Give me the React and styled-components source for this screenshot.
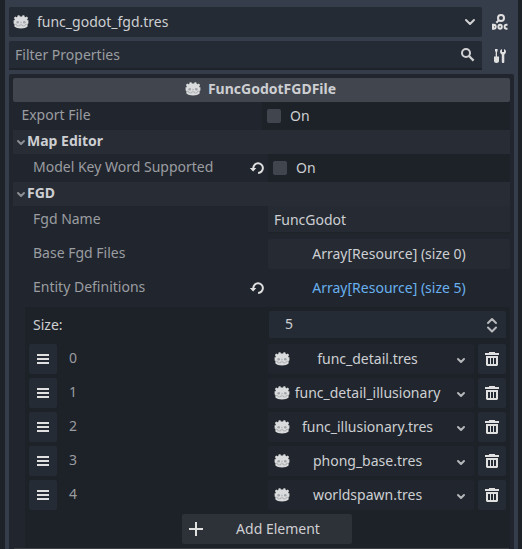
import React from "react";
import styled, { createGlobalStyle } from "styled-components";

const Global = createGlobalStyle`
  * { box-sizing: border-box; }
  body { margin: 0; background: #1d2229; overflow: hidden; }
  svg { display: block; flex: none; }
`;

const Frame = styled.div`
  width: 522px;
  height: 549px;
  padding: 0 4px 0 5px;
  overflow: hidden;
  background: #1d2229;
  color: #cdcfd2;
  font: 14px/20px "Noto Sans", sans-serif;
  white-space: nowrap;
`;
const Dock = styled.div`
  height: 549px;
  padding: 7px 4px 0;
  background: #363d4a;
  display: flex;
  flex-direction: column;
  gap: 4px;
`;
const ToolRow = styled.div`
  display: flex;
  align-items: center;
  height: ${(p) => p.$h}px;
`;
const ResourceSelect = styled.div`
  width: 473px;
  height: 30px;
  padding: 0 4px;
  border-radius: 2px;
  background: #252b34;
  display: flex;
  align-items: center;
`;
const ResourceName = styled.span`
  flex: 1;
  margin-left: 8px;
`;
const SearchField = styled.div`
  width: 473px;
  height: 29px;
  padding: 1px 6px 0;
  border-radius: 2px 2px 0 0;
  border-bottom: 2px solid #1e232a;
  background: #252b34;
  color: #9a9da1;
  display: flex;
  align-items: center;
  justify-content: space-between;
`;
const ToolButton = styled.div`
  margin-left: 10px;
`;
const Inspector = styled.div`
  flex: 1;
  padding: 4px 4px 0;
  border-radius: 2px 2px 0 0;
  background: #21262e;
  display: flex;
  flex-direction: column;
`;
const ClassHeader = styled.div`
  height: 24px;
  border-radius: 2px;
  background: #41454d;
  display: flex;
  align-items: center;
  justify-content: center;
  gap: 7px;
  padding: 0 2px 2px 0;
  font-weight: 700;
`;
const Section = styled.div`
  height: 24px;
  padding: 0 0 2px 2px;
  background: #282c34;
  display: flex;
  align-items: center;
  font-weight: 700;

  svg {
    margin-top: 2px;
  }
`;
const Property = styled.div`
  display: flex;
  height: ${(p) => p.$h || 28}px;
  margin-bottom: ${(p) => p.$gap || 0}px;
`;
const PropertyLabel = styled.div`
  flex: 1;
  display: flex;
  align-items: center;
  padding: 0 0 2px ${(p) => (p.$nested ? 20 : 8.4)}px;
  color: #9b9da1;
`;
const Revert = styled.div`
  display: flex;
  align-items: center;
  padding-right: 3px;
`;
const CheckCell = styled.div`
  width: ${(p) => p.$w}px;
  padding-left: 5px;
  border-radius: 2px;
  background: #1d2128;
  display: flex;
  align-items: center;
`;
const CheckBox = styled.span`
  width: 14px;
  height: 14px;
  margin-right: 9px;
  border-radius: 2px;
  background: #41454d;
`;
const TextField = styled.div`
  width: 242px;
  height: 28px;
  padding: 4px 6px;
  border-bottom: 2px solid #1f242b;
  background: #252a33;
`;
const ArrayButton = styled.div`
  width: 242px;
  height: 30px;
  border-radius: 2px;
  background: ${(p) => (p.$open ? "transparent" : "#252a33")};
  color: ${(p) => (p.$open ? "#68b0ee" : "#cdcfd2")};
  line-height: 30px;
  text-align: center;
`;
const ArrayPanel = styled.div`
  margin: 4px 0 0 12px;
  padding: 4px 4px 0;
  height: 241px;
  border-radius: 2px 2px 0 0;
  background: #1d2128;
`;
const SizeRow = styled.div`
  display: flex;
  justify-content: space-between;
  height: 27px;
  margin-bottom: 6px;
  padding-left: 4px;
  line-height: 27px;
`;
const Stepper = styled.div`
  width: 237px;
  padding: 0 8px 0 16px;
  border-radius: 2px 2px 0 0;
  background: #252b34;
  display: flex;
  align-items: center;
  justify-content: space-between;
`;
const StepperValue = styled.span`
  padding-bottom: 2px;
`;
const ElementRow = styled.div`
  display: flex;
  height: 30px;
  margin-bottom: 4px;
`;
const SquareButton = styled.div`
  width: 28px;
  border-radius: 2px;
  background: #252b34;
  display: flex;
  align-items: center;
  justify-content: center;
`;
const ElementIndex = styled.div`
  flex: 1;
  padding: 4px 0 0 12px;
  color: #9a9ca0;
`;
const ElementPicker = styled.div`
  width: 206px;
  margin-right: 4px;
  padding: 0 7px 0 6px;
  border-radius: 2px;
  background: #21262e;
  display: flex;
  align-items: center;
  justify-content: space-between;

  svg:last-child {
    margin-top: 2px;
  }
`;
const ElementName = styled.div`
  width: 149px;
  margin-right: auto;
  margin-left: 3px;
  overflow: hidden;
  text-align: center;
`;
const AddButton = styled.div`
  width: 170px;
  height: 30px;
  margin-left: 153px;
  padding-left: 7px;
  border-radius: 2px;
  background: #2d3138;
  display: flex;
  align-items: center;
`;
const AddText = styled.div`
  flex: 1;
  padding-left: 1px;
  text-align: center;
`;
const BottomRule = styled.div`
  height: 1px;
  margin: 0 1px;
  background: #3c4045;
`;

const GodotHead = () => (
  <svg width="16" height="16" viewBox="0 0 16 16">
    <path
      fill="#dadbdc"
      d="M6.200 1 4.300 1.700l.1 1.300-.9.300L2.200 2.500.9 4l.8 1.300v1H.6v3.200l.8.500v2.600C2.600 13.900 5 14.500 8 14.500s5.400-.6 6.600-1.900V10l.8-.5V6.300h-1.100v-1l.8-1.300-1.300-1.500-1.300.8-.9-.3.1-1.300L9.800 1l-.7 1.400H6.900z"
    />
    <path fill="none" stroke="#8b8e93" strokeWidth=".5" d="M1.500 10.200l2.100.2.300 1.400 2.600.2.300-1.200h2.400l.3 1.200 2.600-.2.300-1.400 2.100-.2" />
    <circle cx="4.700" cy="8.200" r="1.300" fill="#a0a3a7" />
    <circle cx="11.300" cy="8.200" r="1.300" fill="#a0a3a7" />
    <path stroke="#9b9ea2" strokeWidth=".8" d="M8 7.800v1.600" />
  </svg>
);
const Chevron = () => (
  <svg width="16" height="16" viewBox="0 0 16 16">
    <path d="m4 6 4 4 4-4" fill="none" stroke="#cfd0d2" strokeWidth="2" strokeLinecap="round" strokeLinejoin="round" />
  </svg>
);
const SmallChevron = ({ color = "#b4b6b9" }) => (
  <svg width="12" height="12" viewBox="0 0 12 12">
    <path d="m3 5 3 3 3-3" fill="none" stroke={color} strokeWidth="2" strokeLinecap="round" strokeLinejoin="round" />
  </svg>
);
const SearchIcon = () => (
  <svg width="16" height="16" viewBox="0 0 16 16">
    <circle cx="6" cy="6" r="4" fill="none" stroke="#d0d1d3" strokeWidth="2" />
    <path d="m9 9 4.600 4.600" stroke="#d0d1d3" strokeWidth="2.200" />
  </svg>
);
const DocSearchIcon = () => (
  <svg width="16" height="16" viewBox="0 0 16 16">
    <g fill="none" stroke="#e0e0e0" strokeWidth="2">
      <circle cx="9" cy="4" r="3" />
      <path d="M6.900 6.100 4.300 8.700" />
      <path d="M1 10.700v4h.8c1.200 0 1.900-.8 1.900-2s-.7-2-1.900-2zM15.500 10.700h-1c-1.200 0-1.900.8-1.900 2s.7 2 1.900 2h1" />
      <ellipse cx="8.100" cy="12.700" rx="1.700" ry="2" />
    </g>
  </svg>
);
const ToolsIcon = () => (
  <svg width="16" height="16" viewBox="0 0 16 16">
    <path
      fill="#e0e0e0"
      d="M3 1h2.600v2L5 4v4.500h2V13c0 1.300-1 2-2.500 2S2 14.300 2 13V8.500h1.700V4L3 3zM10 1v3h2V1c1.200.5 2 1.500 2 2.800 0 1.200-.7 2.200-1.700 2.700V14c0 .6-.5 1-1.200 1S9.800 14.600 9.800 14V6.500C8.700 6 8 5 8 3.800 8 2.500 8.800 1.500 10 1z"
    />
  </svg>
);
const RevertIcon = () => (
  <svg width="16" height="16" viewBox="0 0 16 16">
    <path d="M4.300 8.300a4.800 4.800 0 1 1 4.800 4.600" fill="none" stroke="#e0e0e0" strokeWidth="2" />
    <path d="M.8 8h6.600L4.100 11.500z" fill="#e0e0e0" />
  </svg>
);
const GripIcon = () => (
  <svg width="12" height="10" viewBox="0 0 12 10">
    <path d="M0 0h12v2H0zM0 4h12v2H0zM0 8h12v2H0z" fill="#e0e0e0" />
  </svg>
);
const TrashIcon = () => (
  <svg width="14" height="14" viewBox="0 0 14 14">
    <path d="M4 0h6v1h4v2H0V1h4zM1 4h12v9l-1 1H2l-1-1zM3 6v6h2V6zM6 6v6h2V6zM9 6v6h2V6z" fill="#e0e0e0" fillRule="evenodd" />
  </svg>
);
const UpDownIcon = () => (
  <svg width="12" height="16" viewBox="0 0 12 16">
    <path d="m2 6 4-4 4 4M2 10.500l4 4 4-4" fill="none" stroke="#b8babd" strokeWidth="2" strokeLinecap="round" strokeLinejoin="round" />
  </svg>
);
const PlusIcon = () => (
  <svg width="14" height="14" viewBox="0 0 14 14">
    <path d="M6 0h2v6h6v2H8v6H6V8H0V6h6z" fill="#e0e0e0" />
  </svg>
);

const elements = [
  "func_detail.tres",
  "func_detail_illusionary",
  "func_illusionary.tres",
  "phong_base.tres",
  "worldspawn.tres",
];

export default function App() {
  return (
    <Frame>
      <Global />
      <Dock>
        <ToolRow $h={30}>
          <ResourceSelect>
            <GodotHead />
            <ResourceName>func_godot_fgd.tres</ResourceName>
            <Chevron />
          </ResourceSelect>
          <ToolButton><DocSearchIcon /></ToolButton>
        </ToolRow>
        <ToolRow $h={29}>
          <SearchField>
            Filter Properties
            <SearchIcon />
          </SearchField>
          <ToolButton><ToolsIcon /></ToolButton>
        </ToolRow>
        <Inspector>
          <ClassHeader><GodotHead />FuncGodotFGDFile</ClassHeader>
          <Property>
            <PropertyLabel>Export File</PropertyLabel>
            <CheckCell $w={248}><CheckBox />On</CheckCell>
          </Property>
          <Section><SmallChevron color="#8b8e93" />Map Editor</Section>
          <Property>
            <PropertyLabel $nested>Model Key Word Supported</PropertyLabel>
            <Revert><RevertIcon /></Revert>
            <CheckCell $w={242}><CheckBox />On</CheckCell>
          </Property>
          <Section><SmallChevron color="#8b8e93" />FGD</Section>
          <Property $gap={5}>
            <PropertyLabel $nested>Fgd Name</PropertyLabel>
            <TextField>FuncGodot</TextField>
          </Property>
          <Property $h={30} $gap={4}>
            <PropertyLabel $nested>Base Fgd Files</PropertyLabel>
            <ArrayButton>Array[Resource] (size 0)</ArrayButton>
          </Property>
          <Property $h={30}>
            <PropertyLabel $nested>Entity Definitions</PropertyLabel>
            <Revert><RevertIcon /></Revert>
            <ArrayButton $open>Array[Resource] (size 5)</ArrayButton>
          </Property>
          <ArrayPanel>
            <SizeRow>
              Size:
              <Stepper><StepperValue>5</StepperValue><UpDownIcon /></Stepper>
            </SizeRow>
            {elements.map((name, i) => (
              <ElementRow key={name}>
                <SquareButton><GripIcon /></SquareButton>
                <ElementIndex>{i}</ElementIndex>
                <ElementPicker>
                  <GodotHead />
                  <ElementName>{name}</ElementName>
                  <SmallChevron />
                </ElementPicker>
                <SquareButton><TrashIcon /></SquareButton>
              </ElementRow>
            ))}
            <AddButton><PlusIcon /><AddText>Add Element</AddText></AddButton>
          </ArrayPanel>
          <BottomRule />
        </Inspector>
      </Dock>
    </Frame>
  );
}
